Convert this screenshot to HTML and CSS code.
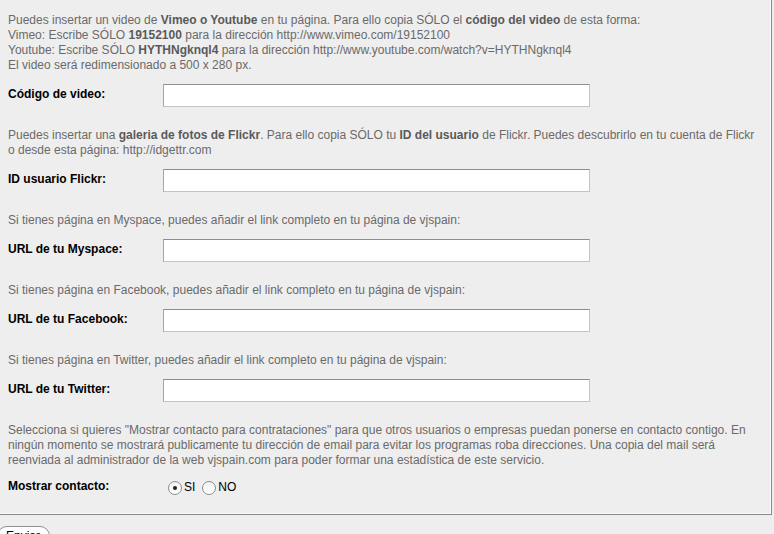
FILE: index.html
```html
<!DOCTYPE html>
<html lang="es">
<head>
<meta charset="utf-8">
<title>Perfil</title>
<link rel="stylesheet" href="styles.css">
</head>
<body>
<form class="form">
  <div class="panel">
    <p class="help">Puedes insertar un video de <b>Vimeo o Youtube</b> en tu página. Para ello copia SÓLO el <b>código del video</b> de esta forma:<br>Vimeo: Escribe SÓLO <b>19152100</b> para la dirección http://www.vimeo.com/19152100<br>Youtube: Escribe SÓLO <b>HYTHNgknql4</b> para la dirección http://www.youtube.com/watch?v=HYTHNgknql4<br>El video será redimensionado a 500 x 280 px.</p>
    <div class="row"><label class="label">Código de video:</label><input class="field" type="text"></div>

    <p class="help">Puedes insertar una <b>galeria de fotos de Flickr</b>. Para ello copia SÓLO tu <b>ID del usuario</b> de Flickr. Puedes descubrirlo en tu cuenta de Flickr o desde esta página: http://idgettr.com</p>
    <div class="row"><label class="label">ID usuario Flickr:</label><input class="field" type="text"></div>

    <p class="help">Si tienes página en Myspace, puedes añadir el link completo en tu página de vjspain:</p>
    <div class="row"><label class="label">URL de tu Myspace:</label><input class="field" type="text"></div>

    <p class="help">Si tienes página en Facebook, puedes añadir el link completo en tu página de vjspain:</p>
    <div class="row"><label class="label">URL de tu Facebook:</label><input class="field" type="text"></div>

    <p class="help">Si tienes página en Twitter, puedes añadir el link completo en tu página de vjspain:</p>
    <div class="row"><label class="label">URL de tu Twitter:</label><input class="field" type="text"></div>

    <p class="help">Selecciona si quieres "Mostrar contacto para contrataciones" para que otros usuarios o empresas puedan ponerse en contacto contigo. En ningún momento se mostrará publicamente tu dirección de email para evitar los programas roba direcciones. Una copia del mail será reenviada al administrador de la web vjspain.com para poder formar una estadística de este servicio.</p>
    <div class="row radios-row">
      <span class="label label-flat">Mostrar contacto:</span>
      <span class="radios">
        <label class="opt"><span class="radio checked"></span>SI</label>
        <label class="opt"><span class="radio"></span>NO</label>
      </span>
    </div>
  </div>
  <button class="submit" type="button">Enviar</button>
</form>
</body>
</html>
```

FILE: styles.css
```css
html, body {
  margin: 0;
  padding: 0;
  background: #eeeeee;
  overflow: hidden;
}
body {
  font-family: "Liberation Sans", Arial, sans-serif;
  font-size: 12px;
}
.form {
  display: flex;
  flex-direction: column;
  align-items: flex-start;
}
.panel {
  box-sizing: border-box;
  width: 772px;
  padding: 13px 12px 20px 8px;
  border-right: 1px solid #8a8a8a;
  border-bottom: 1px solid #8a8a8a;
  box-shadow: inset -1px -1px 0 #fafafa;
}
.help {
  margin: 0 0 11px 0;
  color: #6a6a6a;
  line-height: 15px;
}
.help b {
  color: #5a5a5a;
}
.row {
  display: flex;
  align-items: center;
  margin-bottom: 21px;
}
.label {
  width: 155px;
  flex: none;
  font-weight: bold;
  color: #000;
  line-height: 15px;
  position: relative;
  top: -1px;
}
.label-flat {
  top: 0;
}
.field {
  box-sizing: border-box;
  width: 427px;
  height: 23px;
  margin: 0;
  padding: 2px 4px;
  background: #fff;
  border: 1px solid #c4c4c4;
  border-top-color: #8e8e8e;
  border-left-color: #a6a6a6;
  font: inherit;
}
.radios-row {
  margin-bottom: 0;
  height: 15px;
  align-items: flex-start;
}
.radios {
  display: flex;
  align-items: center;
  gap: 7px;
  padding-left: 5px;
  position: relative;
  top: 1px;
}
.opt {
  display: flex;
  align-items: center;
  gap: 2px;
  color: #000;
  line-height: 15px;
}
.radio {
  box-sizing: border-box;
  width: 14px;
  height: 14px;
  border-radius: 50%;
  border: 1px solid #8c8c8c;
  background: linear-gradient(#f2f2f2, #ffffff);
  position: relative;
}
.radio.checked::after {
  content: "";
  position: absolute;
  left: 4px;
  top: 4px;
  width: 4px;
  height: 4px;
  border-radius: 50%;
  background: #222;
}
.submit {
  margin: 11px 0 0 -3px;
  padding: 2px 9px 2px 8px;
  height: 20px;
  border: 1px solid #8e8e8e;
  border-radius: 10px;
  background: #fff;
  font-family: "Liberation Sans", Arial, sans-serif;
  font-size: 12px;
  color: #000;
}
```
